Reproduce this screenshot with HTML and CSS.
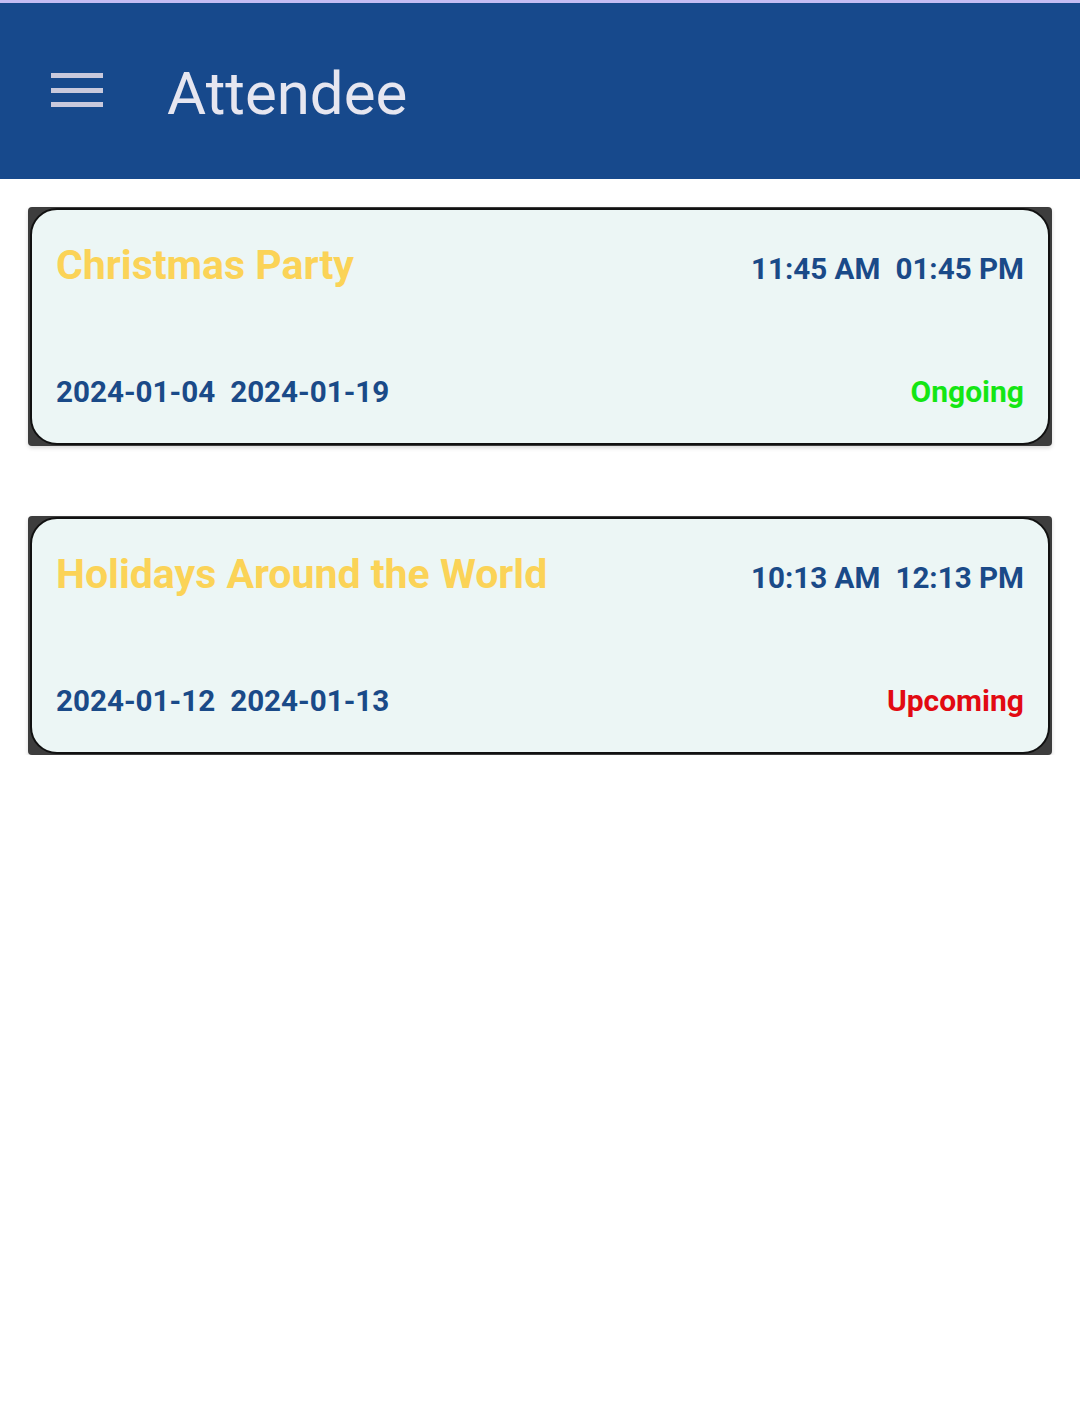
FILE: index.html
```html
<!DOCTYPE html>
<html>
<head>
<meta charset="utf-8">
<link rel="stylesheet" href="styles.css">
</head>
<body>
<div class="statusline"></div>
<header class="appbar">
  <div class="menu" aria-label="menu">
    <span class="bar"></span><span class="bar"></span><span class="bar"></span>
  </div>
  <h1 class="title">Attendee</h1>
</header>
<main class="list">
  <div class="card-wrap">
    <div class="card">
      <div class="row top">
        <div class="event-name">Christmas Party</div>
        <div class="times"><span>11:45 AM</span><span>01:45 PM</span></div>
      </div>
      <div class="row bottom">
        <div class="dates"><span>2024-01-04</span><span>2024-01-19</span></div>
        <div class="status ongoing">Ongoing</div>
      </div>
    </div>
  </div>
  <div class="card-wrap">
    <div class="card">
      <div class="row top">
        <div class="event-name">Holidays Around the World</div>
        <div class="times"><span>10:13 AM</span><span>12:13 PM</span></div>
      </div>
      <div class="row bottom">
        <div class="dates"><span>2024-01-12</span><span>2024-01-13</span></div>
        <div class="status upcoming">Upcoming</div>
      </div>
    </div>
  </div>
</main>
</body>
</html>
```
FILE: styles.css
```css
html, body {
  margin: 0;
  padding: 0;
  background: #ffffff;
  font-family: Roboto, "Liberation Sans", sans-serif;
}
.statusline {
  height: 3px;
  background: #c4bdf4;
}
.appbar {
  height: 176px;
  background: #17498c;
  display: flex;
  align-items: center;
  box-sizing: border-box;
  padding-left: 51px;
}
.menu {
  width: 52px;
  display: flex;
  flex-direction: column;
  gap: 9.5px;
  margin-top: -2px;
}
.menu .bar {
  display: block;
  height: 5px;
  background: #c9c9dc;
}
.title {
  margin: 6px 0 0 64px;
  font-weight: 400;
  font-size: 60px;
  color: #e6e6f0;
  line-height: 1;
}
.list {
  padding: 28px 28px 0 28px;
  display: flex;
  flex-direction: column;
  gap: 70px;
}
.card-wrap {
  background: #3d3d3d;
  border-radius: 4px;
  padding: 1px 2px 1px 2px;
  box-shadow: 0 2px 4px rgba(0,0,0,0.15);
}
.card {
  background: #ecf6f5;
  border: 2.5px solid #111;
  border-radius: 27px;
  height: 237px;
  box-sizing: border-box;
  padding: 35px 24px 0 24px;
  display: flex;
  flex-direction: column;
  justify-content: space-between;
}
.row {
  display: flex;
  justify-content: space-between;
  align-items: baseline;
}
.row.bottom {
  padding-bottom: 35px;
}
.event-name {
  font-size: 41px;
  font-weight: 700;
  color: #fbd357;
  line-height: 1;
}
.times, .dates {
  display: flex;
  gap: 15px;
  font-size: 29.6px;
  font-weight: 700;
  color: #1a4a88;
  line-height: 1;
}
.status {
  font-size: 30px;
  font-weight: 700;
  line-height: 1;
}
.ongoing { color: #14e614; }
.upcoming { color: #e20a12; }
```
